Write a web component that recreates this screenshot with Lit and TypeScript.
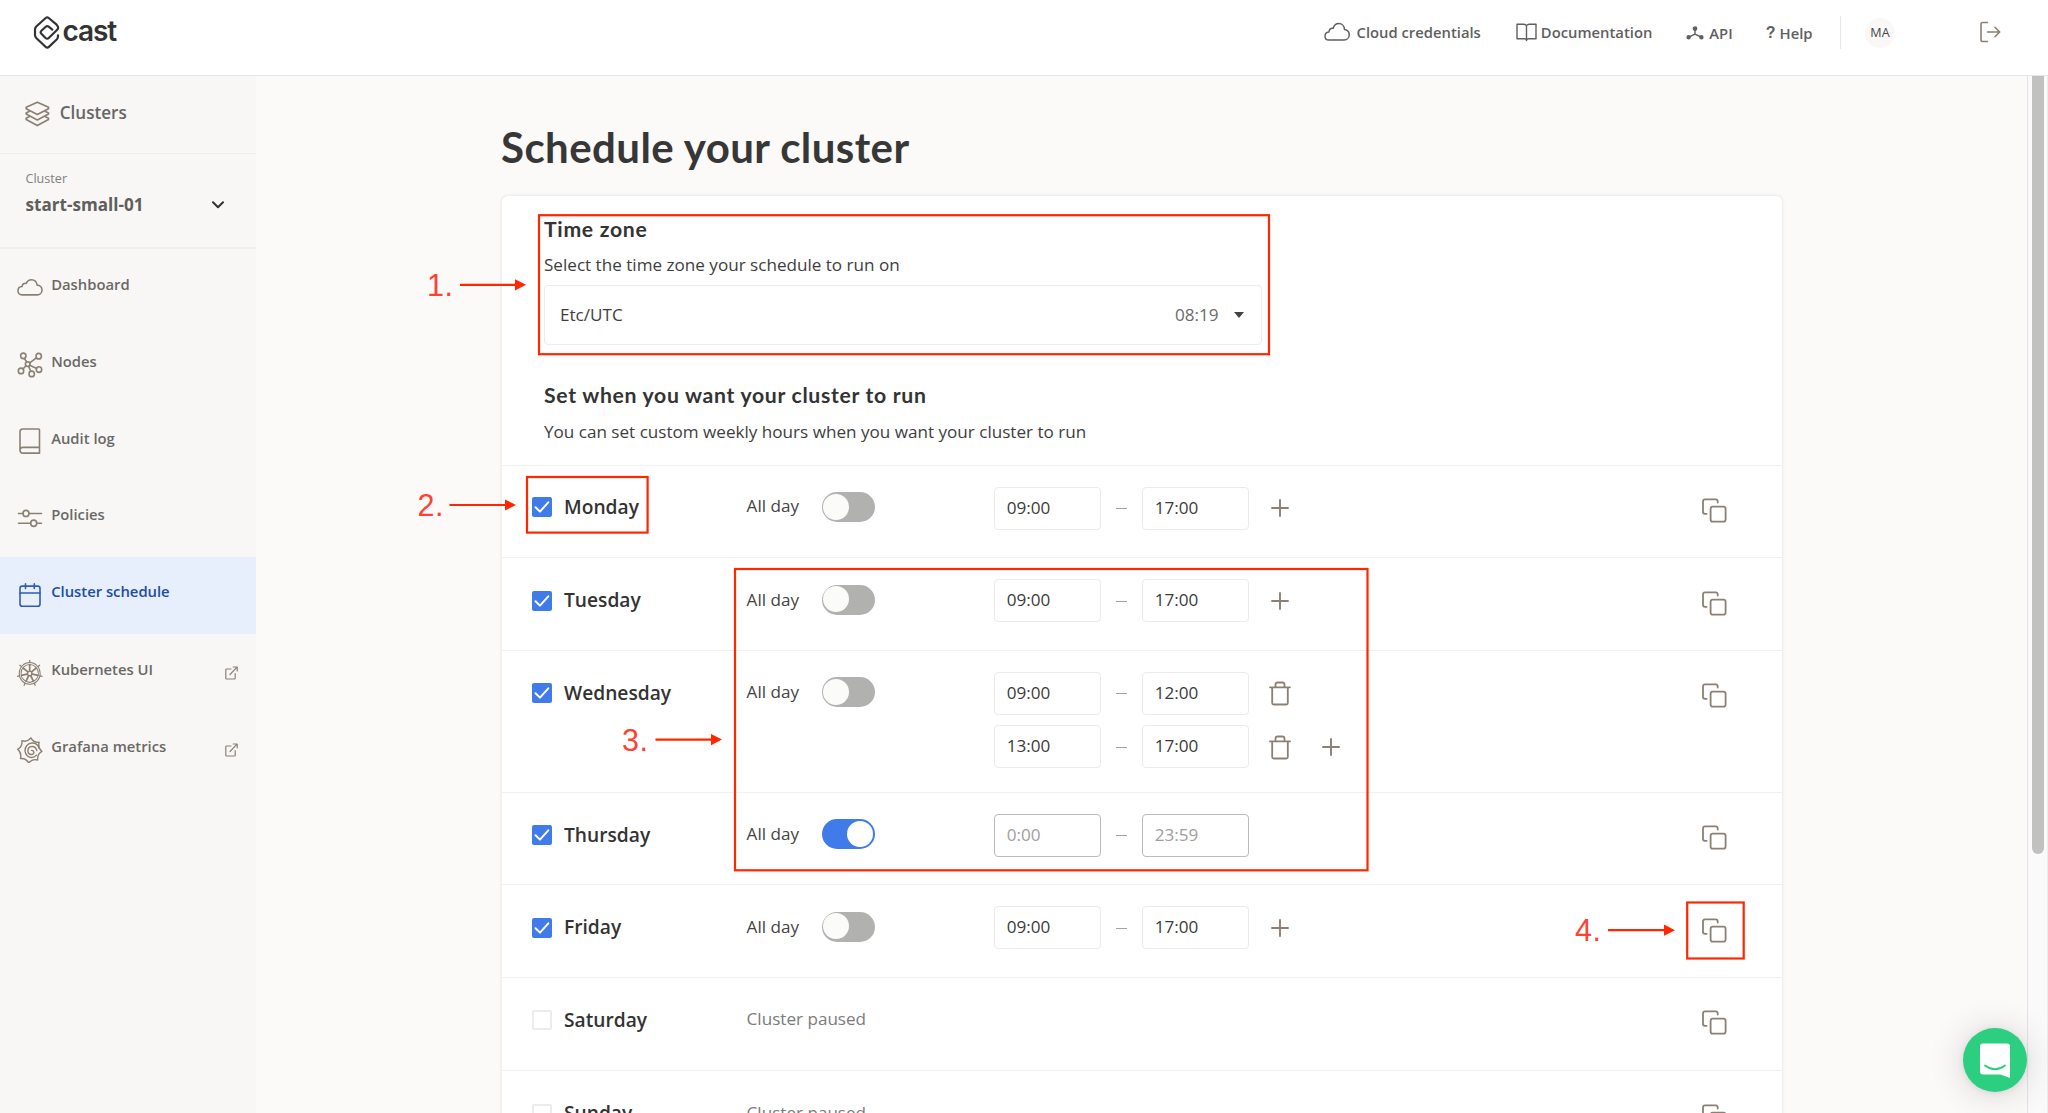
import { LitElement, html, svg, css, nothing } from "lit";
import { customElement } from "lit/decorators.js";
import { classMap } from "lit/directives/class-map.js";

type Slot = { from: string; to: string; remove?: boolean; add?: boolean; disabled?: boolean };
type Day = { name: string; on: boolean; allDay?: boolean; slots?: Slot[]; size?: string };

const DAYS: Day[] = [
  { name: "Monday", on: true, slots: [{ from: "09:00", to: "17:00", add: true }], size: "lead" },
  { name: "Tuesday", on: true, slots: [{ from: "09:00", to: "17:00", add: true }] },
  {
    name: "Wednesday",
    on: true,
    size: "tall",
    slots: [
      { from: "09:00", to: "12:00", remove: true },
      { from: "13:00", to: "17:00", remove: true, add: true },
    ],
  },
  { name: "Thursday", on: true, allDay: true, slots: [{ from: "0:00", to: "23:59", disabled: true }] },
  { name: "Friday", on: true, slots: [{ from: "09:00", to: "17:00", add: true }] },
  { name: "Saturday", on: false, size: "wide" },
  { name: "Sunday", on: false },
];

const polar = (cx: number, cy: number, r: number, deg: number) => {
  const a = ((deg - 90) * Math.PI) / 180;
  return [cx + r * Math.cos(a), cy + r * Math.sin(a)];
};

const SPOKES = Array.from({ length: 7 }, (_, i) => (i * 360) / 7);

// Eight-pointed outline whose sides dip inwards between the points.
const flareOutline = () => {
  const at = (r: number, deg: number) => polar(12.8, 13, r, deg).map((n) => n.toFixed(2)).join(" ");
  let path = `M${at(12.2, 5)}`;
  for (let i = 0; i < 8; i++) path += `Q${at(8.2, 27.5 + i * 45)} ${at(12.2, 50 + i * 45)}`;
  return path + "z";
};

const ICONS = {
  cloud: svg`<path d="M4.9 20.2C2.6 20.2 1 18.4 1 16.2c0-2.3 1.7-4 4-4.1.5-2.4 2.3-3.5 4.3-3C10.300 6.900 12.100 5.600 14.500 5.600c3.200 0 5.200 2.200 5.600 5.200 2.900.1 4.900 2.200 4.900 4.800 0 2.700-2.100 4.600-4.600 4.600z" />`,
  nodes: svg`<path d="M9.800 10.600 7.300 7.200M12.800 11.600l6.500-5M9 14.300l-3 3M11.700 14.900l2 4.800M12.900 13.800l6.700 3.100" />
    <circle cx="6.300" cy="4.700" r="2.700" /><circle cx="21.700" cy="5" r="2.700" /><circle cx="10.700" cy="12.700" r="2.300" />
    <circle cx="4" cy="19.300" r="2.700" /><circle cx="14.700" cy="22.200" r="2.700" /><circle cx="22" cy="18" r="2.700" />`,
  book: svg`<path d="M22.500 24.400H5.700a2.700 2.700 0 0 1-2.700-2.700V3.700A2.700 2.700 0 0 1 5.700 1h15.800a1 1 0 0 1 1 1zM3 21.700a2.700 2.700 0 0 1 2.700-2.900h16.800" />`,
  sliders: svg`<path d="M1.500 8.200H6M12 8.200h12.500M1.500 17.700h12M19.800 17.700h4.700" /><circle cx="9" cy="8.200" r="3" /><circle cx="16.700" cy="17.700" r="3" />`,
  calendar: svg`<rect x="3" y="4" width="20" height="19.500" rx="2.200" /><path d="M3 10.700h20M8.500 1.700v4.600M17.300 1.700v4.600" />`,
  wheel: svg`<g stroke-width="1"><circle cx="12.700" cy="13" r="10.500" /><circle cx="12.700" cy="13" r="8.700" /><circle cx="12.700" cy="13" r="2.200" stroke-width="1.400" />
    ${SPOKES.map((d) => {
      const [a, b] = polar(12.7, 13, 2.8, d);
      const [c, e] = polar(12.7, 13, 8.4, d);
      const [f, g] = polar(12.7, 13, 10.7, d);
      const [h, k] = polar(12.7, 13, 12.6, d);
      return svg`<path stroke-width="1.700" d="M${a} ${b}L${c} ${e}" /><path stroke-width="1.300" d="M${f} ${g}L${h} ${k}" />`;
    })}</g>`,
  flare: svg`<g stroke-width="1.400"><path d=${flareOutline()} />
    <path d="M22.300 11.200c-1.300-3.700-4.300-5.600-7.700-5.300-4.100.4-6.900 3.700-6.600 7.700.3 3.700 3.300 6.400 6.900 6.200 2-.1 3.500-.9 4.500-2.200M19.800 13.200c-.6-2.700-2.500-4.100-4.800-4-2.600.2-4.200 2.200-4.100 4.500.1 2 1.600 3.400 3.500 3.300 1.300 0 2.200-.7 2.600-1.700-.2-1.600-1.100-2.400-2.500-2.300" /></g>`,
};

type NavItem = { icon: keyof typeof ICONS; label: string; external?: boolean; active?: boolean };

const NAV: NavItem[] = [
  { icon: "cloud", label: "Dashboard" },
  { icon: "nodes", label: "Nodes" },
  { icon: "book", label: "Audit log" },
  { icon: "sliders", label: "Policies" },
  { icon: "calendar", label: "Cluster schedule", active: true },
  { icon: "wheel", label: "Kubernetes UI", external: true },
  { icon: "flare", label: "Grafana metrics", external: true },
];

const base = css`
  * { box-sizing: border-box; }
  svg { display: block; fill: none; stroke: currentColor; stroke-linecap: round; stroke-linejoin: round; flex: none; }
`;

@customElement("top-bar")
export class TopBar extends LitElement {
  static styles = [base, css`
    :host { display: flex; height: 76px; background: #fff; border-bottom: 1px solid #e7e6e7; padding-left: 33px; color: #5f5f5f; position: relative; z-index: 1; }
    .logo { display: flex; color: #333; }
    .mark { margin-top: 15px; }
    .word { font: 600 28px/30px Inter, sans-serif; letter-spacing: -1.1px; margin: 16px 0 0 1.500px; }
    .links { display: flex; margin-left: auto; }
    .link { display: flex; font-size: 14.8px; font-weight: 600; line-height: 20px; margin-top: 22px; }
    .low { margin-top: 23px; }
    .cloud { margin: 0 6.500px 0 0; }
    .docs { margin-left: 35px; }
    .docs svg { margin: 1px 4px 0 0; }
    .api { margin-left: 34px; }
    .api svg { margin: 3px 5px 0 0; }
    .help { margin-left: 33px; }
    .q { font: 700 16px/20px "Liberation Sans", sans-serif; margin-right: 4px; }
    .divider { width: 1px; height: 33px; margin: 16px 24px 0 27.500px; background: #e6e6e6; }
    .avatar { width: 30px; height: 30px; border-radius: 50%; background: #f9f8f7; font-size: 12.6px; line-height: 30px; text-align: center; margin-top: 18px; color: #444; }
    .exit { margin: 21px 47px 0 85px; color: #8b8073; }
  `];
  render() {
    return html`
      <div class="logo">
        <svg class="mark" width="28" height="35" viewBox="0 0 28 35" stroke-width="2.200">
          <path d="M19.300 14.600 15.700 11.700Q14.200 10.600 12.700 11.800L8.400 15.700Q6.800 17.200 8.400 18.800L12.500 23Q14.100 24.400 15.700 23L23.700 15.300Q25.200 13.900 25.200 12.700 25.200 11.300 23.600 9.700L15.700 3Q14.200 1.800 12.700 3L3.500 11.300Q2 12.700 2 14.500V20Q2 21.700 3.500 23.200L12.500 31.800Q14.200 33.500 15.900 31.900L23.900 24.200Q25 23 25 21.500V20.300" />
        </svg>
        <span class="word">cast</span>
      </div>
      <nav class="links">
        <a class="link"><svg class="cloud" width="26" height="19" viewBox="0 0 26 19" stroke-width="1.500">
            <path d="M5 18.100C2.600 18.100 1 16.400 1 14.200 1 11.900 2.600 10.200 4.900 10 5.300 7.300 6.900 5.900 9.200 6.200 10.200 3.200 12 1.600 14.700 1.600c3.200 0 5.600 2.400 5.800 5.800C23.100 7.800 25.200 9.900 25.200 12.700c0 3.100-2.300 5.400-5.100 5.400z" />
          </svg>Cloud credentials</a>
        <a class="link docs"><svg width="21" height="19" viewBox="0 0 21 19" stroke-width="1.400">
            <path d="M10.500 3.300C10.500 1.900 9.200 1.200 7.500 1.200H1v14.500h7.200c1.400 0 2.300.6 2.300 1.900M10.500 3.300c0-1.400 1.300-2.100 3-2.100H20v14.500h-7.200c-1.400 0-2.300.6-2.300 1.900M10.500 3.300v14.300" />
          </svg>Documentation</a>
        <a class="link low api"><svg width="18" height="14" viewBox="0 0 18 14" stroke-width="1.400">
            <g fill="currentColor"><circle cx="9" cy="2.600" r="1.700" /><circle cx="2.600" cy="11.300" r="1.500" /><circle cx="15.400" cy="11.300" r="1.500" /></g>
            <path d="M9 3v5.200L3 11M9 8.200l6 2.800" />
          </svg>API</a>
        <a class="link low help"><span class="q">?</span>Help</a>
      </nav>
      <div class="divider"></div>
      <div class="avatar">MA</div>
      <svg class="exit" width="21" height="22" viewBox="0 0 21 22" stroke-width="1.600">
        <path d="M7.500 1.500H2.700q-1.700 0-1.700 1.700v15.600q0 1.700 1.700 1.700h4.800M7.500 11h12M15 6.300 19.700 11 15 15.700" />
      </svg>`;
  }
}

@customElement("side-bar")
export class SideBar extends LitElement {
  static styles = [base, css`
    :host { display: flex; flex-direction: column; width: 256px; background: #f8f7f5; color: #6a6966; }
    .clusters { display: flex; height: 78px; padding: 25px 0 0 25px; border-bottom: 1px solid #efeeec; font-size: 17.1px; font-weight: 600; color: #666; }
    .clusters span { line-height: 24px; margin: 0 0 0 9.700px; }
    svg { color: #8b8073; }
    .picker { height: 95.300px; border-bottom: 2px solid #efeeec; padding: 15px 32px 0 25.500px; }
    .label { font-size: 12.6px; line-height: 20px; color: #81807e; }
    .current { display: flex; justify-content: space-between; align-items: center; font-size: 17.1px; font-weight: 700; line-height: 24px; margin-top: 4px; color: #5f5e5c; }
    .current svg { color: #333; }
    .item { display: flex; height: 76.900px; padding: 24.800px 0 0 17px; font-size: 14.8px; font-weight: 600; }
    .item span { line-height: 20px; margin: -.3px 0 0 8.200px; flex: 1; }
    .item .out { margin: 6px 18px 0 0; }
    .active { background: #e7eefc; color: #204caa; margin-bottom: 1.200px; }
    .active svg { color: #2f5cba; }
  `];
  render() {
    return html`
      <div class="clusters">
        <svg width="25" height="26" viewBox="0 0 25 26" stroke-width="1.700">
          <path d="M12.300 1.200 23.500 6.300v1.400L12.300 13.600 1.200 7.700V6.300zM4 10.400l-2.800 1.500v1.200l11.100 5.900 11.200-5.900v-1.200l-2.900-1.500M4 15.800l-2.800 1.500v1.200l11.100 6.100 11.200-6.100v-1.200l-2.900-1.500" />
        </svg>
        <span>Clusters</span>
      </div>
      <div class="picker">
        <div class="label">Cluster</div>
        <div class="current">start-small-01
          <svg width="12" height="8" viewBox="0 0 12 8" stroke-width="2"><path d="M1 1.300 6 6.300 11 1.300" /></svg>
        </div>
      </div>
      ${NAV.map((n) => html`
        <a class=${classMap({ item: true, active: !!n.active })}>
          <svg width="26" height="26.800" viewBox="0 0 26 26" preserveAspectRatio="none" stroke-width="1.600">${ICONS[n.icon]}</svg>
          <span>${n.label}</span>
          ${n.external ? html`<svg class="out" width="13" height="14" viewBox="0 0 13 14" stroke-width="1.200">
            <path d="M6 3H1.600q-.8 0-.8.800v8.400q0 .8.800.8h7.800q.8 0 .8-.8V7.500M5 8.500 12 1.200M8.200 1h4v4" /></svg>` : nothing}
        </a>`)}`;
  }
}

@customElement("day-row")
export class DayRow extends LitElement {
  static properties = { day: { attribute: false } };
  declare day: Day;
  static styles = [base, css`
    :host { display: block; }
    .row { display: grid; grid-template-columns: 214px 76px 172px 1fr 80.500px; align-items: start; height: 92.500px; border-top: 1px solid #f1f1f1; padding-left: 30px; color: #333; font-size: 17.1px; }
    .tall { height: 142.300px; }
    .wide { height: 93.500px; }
    .day { display: flex; font-size: 19.2px; font-weight: 600; line-height: 30px; margin-top: 27px; }
    .lead .day { margin-top: 26px; }
    .box { width: 20px; height: 20px; margin: 5.500px 12px 0 0; border: 2px solid #ececec; border-radius: 2px; background: #fff; }
    .on .box { border: 0; background: #417be9; }
    .box svg { color: #fff; }
    .all { line-height: 30px; margin: 26.500px 0 0 .6px; color: #444; }
    .lead .all { margin-top: 25.500px; }
    .paused { grid-column: 2 / 5; line-height: 30px; margin: 26.500px 0 0 .6px; color: #7c7c7c; }
    .switch { width: 53px; height: 30px; border-radius: 15px; background: #b1b1af; padding: 1.500px 1px; margin-top: 26.700px; display: flex; }
    .knob { width: 26px; height: 26px; border-radius: 50%; background: #fbfbfa; }
    .full { background: #417be9; justify-content: flex-end; padding-right: 2.500px; }
    .full .knob { background: #fff; }
    .hours { display: flex; flex-direction: column; gap: 10.500px; margin-top: 21px; }
    .slot { display: flex; align-items: center; height: 43px; }
    .time { width: 107px; height: 43px; border: 1.500px solid #ebebeb; border-radius: 4px; padding-left: 11.800px; line-height: 40px; color: #3b3b3b; background: #fff; }
    .off { border-color: #bbb; color: #9e9e9e; }
    .dash { width: 11px; height: 1px; background: #a3a3a3; margin: 1px 15px 0; }
    .bin { color: #8b8073; margin: 1px -3px 0 20px; }
    .plus { color: #8b8073; margin-left: 22px; }
    .bin + .plus { margin-left: 34px; }
    .copy { color: #8b8073; margin-top: 32.500px; }
  `];
  render() {
    const d = this.day;
    return html`<div class="row ${d.size ?? ""} ${d.on ? "on" : ""}">
      <div class="day">
        <div class="box">${d.on ? html`<svg width="20" height="20" viewBox="0 0 20 20" stroke-width="2"><path d="M3.500 10.200 8 14.600 16.300 5.300" /></svg>` : nothing}</div>
        ${d.name}
      </div>
      ${d.on ? html`
        <div class="all">All day</div>
        <div class="switch ${d.allDay ? "full" : ""}"><div class="knob"></div></div>
        <div class="hours">${(d.slots ?? []).map((s) => html`
          <div class="slot">
            <div class="time ${s.disabled ? "off" : ""}">${s.from}</div>
            <div class="dash"></div>
            <div class="time ${s.disabled ? "off" : ""}">${s.to}</div>
            ${s.remove ? html`<svg class="bin" width="22" height="25" viewBox="0 0 22 25" stroke-width="1.800">
              <path d="M1 6.300h20M6.500 6V3.700Q6.500 1.500 8.700 1.500h4.600q2.200 0 2.200 2.200V6M3.200 6.500V22q0 1.500 1.500 1.500h12.600q1.500 0 1.500-1.500V6.500" /></svg>` : nothing}
            ${s.add ? html`<svg class="plus" width="18" height="18" viewBox="0 0 18 18" stroke-width="1.900"><path d="M9 1v16M1 9h16" /></svg>` : nothing}
          </div>`)}
        </div>` : html`<div class="paused">Cluster paused</div>`}
      <svg class="copy" width="25" height="25" viewBox="0 0 25 25" stroke-width="1.800">
        <rect x="8.600" y="8.700" width="15" height="15" rx="2.200" /><path d="M15.700 4.600V3.400Q15.700 1.400 13.700 1.400H3Q1 1.400 1 3.400v10.700q0 1.700 2 1.700h1.600" />
      </svg>
    </div>`;
  }
}

@customElement("app-root")
export class AppRoot extends LitElement {
  static styles = [base, css`
    :host { display: block; position: relative; height: 1113px; overflow: hidden; font-family: "Open Sans", "Noto Sans", sans-serif; background: #fbfaf9; }
    .body { display: flex; height: 1037px; }
    side-bar { flex: none; }
    .main { flex: 1; padding-left: 246px; overflow: hidden; }
    .title { margin: 46px 0 24px -1px; font: 700 42px/50px Lato, sans-serif; letter-spacing: .43px; color: #373737; }
    .card { width: 1280px; background: #fff; border-radius: 6px; box-shadow: 0 0 3px 1px rgba(0, 0, 0, .07); overflow: hidden; }
    .intro { height: 268.500px; padding: 18px 42px 0; color: #3e3e3e; font-size: 17.1px; }
    .head { font: 700 21.2px/30px Lato, sans-serif; letter-spacing: .7px; color: #333; margin: 0; }
    .text { margin: 7.500px 0 0; line-height: 26px; }
    .zone + .head + .text { margin-top: 8.500px; }
    .zone { display: flex; align-items: center; width: 718px; height: 60px; margin: 7.500px 0 35px; border: 1.500px solid #ececec; border-radius: 4px; padding: 0 17px 2px 15px; }
    .now { margin-left: auto; color: #6b6b6b; }
    .caret { width: 0; border: 5.500px solid transparent; border-top: 6px solid #444; border-bottom: 0; margin: 2px 0 0 15.500px; }
    .rail { width: 21px; flex: none; background: #fafafa; border-left: 1px solid #e4e4e4; border-right: 1px solid #ececec; padding-left: 4px; }
    .thumb { width: 12px; height: 778px; background: #c1c1c0; border-radius: 0 0 6px 6px; }
    .notes { position: absolute; left: 0; top: 0; width: 2048px; height: 1113px; pointer-events: none; z-index: 2; }
    .lines { position: absolute; left: 0; top: 0; color: #ff2600; stroke-linejoin: miter; stroke-linecap: butt; }
    .num { position: absolute; font: 30.500px/34px "Liberation Sans", sans-serif; color: #ff4133; letter-spacing: .5px; }
    .n1 { left: 427px; top: 268px; }
    .n2 { left: 417.500px; top: 488px; }
    .n3 { left: 622px; top: 723px; }
    .n4 { left: 1575px; top: 913px; }
    .chat { position: absolute; left: 1963px; top: 1028px; width: 64px; height: 64px; border-radius: 50%; background: #2bcf7f; box-shadow: 0 1px 6px rgba(0, 0, 0, .08), 0 2px 36px rgba(0, 0, 0, .16); z-index: 3; }
  `];
  private arrow(x: number, tip: number, y: number) {
    return svg`<path d="M${x} ${y}H${tip - 10}" /><path d="M${tip - 11} ${y - 5.6}L${tip} ${y}L${tip - 11} ${y + 5.6}z" fill="currentColor" stroke="none" />`;
  }
  render() {
    return html`
      <top-bar></top-bar>
      <div class="body">
        <side-bar></side-bar>
        <main class="main">
          <h1 class="title">Schedule your cluster</h1>
          <section class="card">
            <div class="intro">
              <h2 class="head">Time zone</h2>
              <p class="text">Select the time zone your schedule to run on</p>
              <div class="zone">Etc/UTC<span class="now">08:19</span><i class="caret"></i></div>
              <h2 class="head">Set when you want your cluster to run</h2>
              <p class="text">You can set custom weekly hours when you want your cluster to run</p>
            </div>
            ${DAYS.map((d) => html`<day-row .day=${d}></day-row>`)}
          </section>
        </main>
        <div class="rail"><div class="thumb"></div></div>
      </div>
      <div class="notes">
        <svg class="lines" width="2048" height="1113" viewBox="0 0 2048 1113" stroke-width="2.200">
          <rect x="539" y="215.200" width="730" height="139" />
          <rect x="527" y="477" width="120.600" height="55.600" />
          <rect x="735" y="569" width="632.500" height="301.300" />
          <rect x="1687.200" y="902.500" width="56.500" height="56" />
          ${this.arrow(460, 526, 284.8)}${this.arrow(449.5, 516, 505)}${this.arrow(655.5, 722, 739.6)}${this.arrow(1608, 1675, 930.2)}
        </svg>
        <span class="num n1">1.</span><span class="num n2">2.</span><span class="num n3">3.</span><span class="num n4">4.</span>
      </div>
      <div class="chat">
        <svg width="64" height="64" viewBox="0 0 64 64">
          <path d="M20 15.500h24q3 0 3 3V50l-9.500-3.500H20q-3 0-3-3v-25q0-3 3-3z" fill="#fff" stroke="none" />
          <path d="M22 37.500q10 7.500 20 0" stroke="#2bcf7f" stroke-width="1.800" />
        </svg>
      </div>`;
  }
}
